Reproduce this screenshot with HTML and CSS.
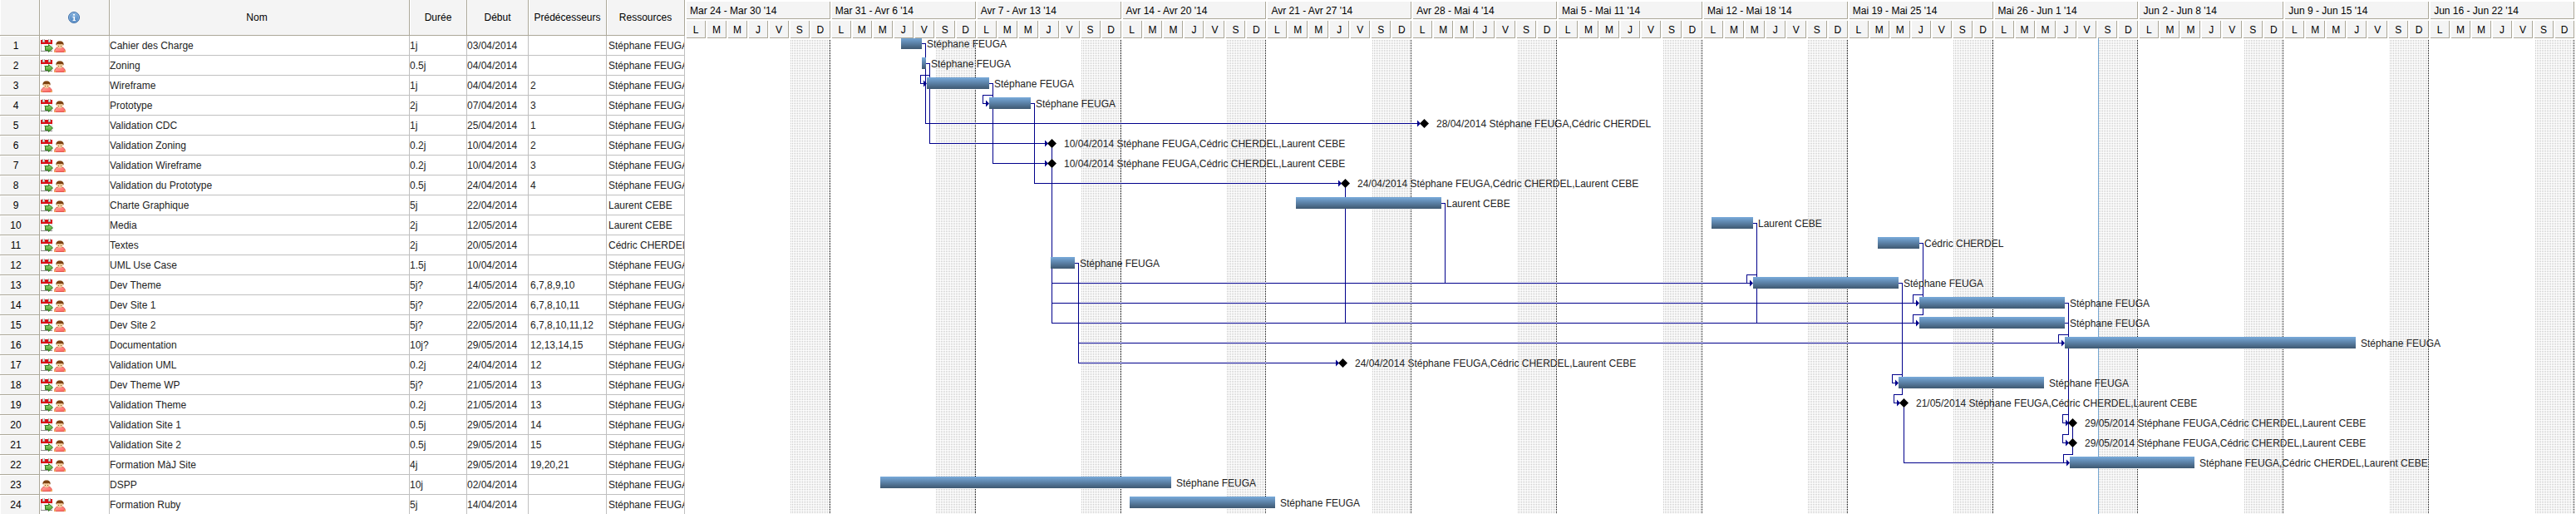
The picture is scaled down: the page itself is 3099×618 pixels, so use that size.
FILE: index.html
```html
<!DOCTYPE html>
<html lang="fr">
<head>
<meta charset="utf-8">
<title>Planning du projet</title>
<link rel="stylesheet" href="styles.css">
</head>
<body>
<svg class="symbols" aria-hidden="true">
  <defs>
    <linearGradient id="arrow-fill" x1="0" y1="0" x2="0" y2="1"><stop offset="0" stop-color="#9fd880"/><stop offset="1" stop-color="#3f9a22"/></linearGradient>
    <linearGradient id="body-fill" x1="0" y1="0" x2="1" y2="1"><stop offset="0" stop-color="#ffaaa4"/><stop offset="1" stop-color="#ff5f5a"/></linearGradient>
    <radialGradient id="info-fill" cx=".5" cy=".3" r=".7"><stop offset="0" stop-color="#8db8e2"/><stop offset="1" stop-color="#3f78b8"/></radialGradient>
  </defs>
  <symbol id="calendar" viewBox="0 0 16 16">
    <path d="M0 6h14v9H0z" fill="#fbfbfb"/>
    <path d="M0 6h1v9H0z" fill="#c9c9c9"/>
    <path d="M13 6h1v9h-1z" fill="#dcdcdc"/>
    <path d="M0 14h14v1H0z" fill="#8f8f8f"/>
    <path d="M0 1h14v5H0z" fill="#d90f16"/>
    <path d="M2 0h3v4H2zM9 0h3v4H9z" fill="#a9a9a9"/>
    <path d="M3 0h1v3H3zM10 0h1v3h-1z" fill="#f2f2f2"/>
    <path d="M4 8h5v1H4z" fill="#9a9a9a"/>
    <path d="M5.500 8.500h4v-2l5 4.500-5 4.500v-2h-4z" fill="url(#arrow-fill)" stroke="#2f7d1b"/>
  </symbol>
  <symbol id="person" viewBox="0 0 16 16">
    <path d="M.5 15.500c0-3 1.500-5 4-5.500h5c2.500.5 4 2.500 4 5.500z" fill="url(#body-fill)" stroke="#e0564e"/>
    <path d="M0 14h2v2H0zM12 14h2v2h-2z" fill="#eda45e"/>
    <path d="M5 9h4v2H5z" fill="#e8b98c"/>
    <path d="M3 6.500c0-3 1.500-4 4-4s4 1 4 4-1.500 4-4 4-4-1-4-4z" fill="#f6cf9f"/>
    <path d="M2.500 7.500c-.5-3 1-5 4.500-5s5 2 4.500 5l-1.500-1.500c-2 .4-4 .4-6 0z" fill="#7d4312"/>
    <path d="M5 8h1v1H5zM8 8h1v1H8z" fill="#8a5a32"/>
  </symbol>
  <symbol id="diamond" viewBox="0 0 11 11"><path d="M5.500 0L11 5.500 5.500 11 0 5.500z"/></symbol>
</svg>

<main class="planner">
<table class="tasks">
<colgroup><col class="c-num"><col class="c-info"><col class="c-name"><col class="c-dur"><col class="c-start"><col class="c-pred"><col class="c-res"></colgroup>
<thead>
<tr><th></th><th><svg class="info" viewBox="0 0 14 14" role="img" aria-label="Informations"><circle cx="7" cy="7" r="6.500" fill="url(#info-fill)" stroke="#3c6ea8"/><circle cx="7" cy="7" r="5.500" fill="none" stroke="#b5d3ef" stroke-opacity=".5"/><path d="M6 3h2v1.500H6zM5.500 6H8v4h1v1H5.500v-1h1V7h-1z" fill="#fff"/></svg></th><th class="name-head">Nom</th><th>Durée</th><th>Début</th><th>Prédécesseurs</th><th>Ressources</th></tr>
</thead>
<tbody>
<tr><th>1</th><td><div class="icons"><svg><use href="#calendar"/></svg><svg><use href="#person"/></svg></div></td><td>Cahier des Charge</td><td>1j</td><td>03/04/2014</td><td></td><td>Stéphane FEUGA</td></tr>
<tr><th>2</th><td><div class="icons"><svg><use href="#calendar"/></svg><svg><use href="#person"/></svg></div></td><td>Zoning</td><td>0.5j</td><td>04/04/2014</td><td></td><td>Stéphane FEUGA</td></tr>
<tr><th>3</th><td><div class="icons"><svg><use href="#person"/></svg></div></td><td>Wireframe</td><td>1j</td><td>04/04/2014</td><td>2</td><td>Stéphane FEUGA</td></tr>
<tr><th>4</th><td><div class="icons"><svg><use href="#calendar"/></svg><svg><use href="#person"/></svg></div></td><td>Prototype</td><td>2j</td><td>07/04/2014</td><td>3</td><td>Stéphane FEUGA</td></tr>
<tr><th>5</th><td><div class="icons"><svg><use href="#calendar"/></svg></div></td><td>Validation CDC</td><td>1j</td><td>25/04/2014</td><td>1</td><td>Stéphane FEUGA</td></tr>
<tr><th>6</th><td><div class="icons"><svg><use href="#calendar"/></svg><svg><use href="#person"/></svg></div></td><td>Validation Zoning</td><td>0.2j</td><td>10/04/2014</td><td>2</td><td>Stéphane FEUGA</td></tr>
<tr><th>7</th><td><div class="icons"><svg><use href="#calendar"/></svg><svg><use href="#person"/></svg></div></td><td>Validation Wireframe</td><td>0.2j</td><td>10/04/2014</td><td>3</td><td>Stéphane FEUGA</td></tr>
<tr><th>8</th><td><div class="icons"><svg><use href="#calendar"/></svg><svg><use href="#person"/></svg></div></td><td>Validation du Prototype</td><td>0.5j</td><td>24/04/2014</td><td>4</td><td>Stéphane FEUGA</td></tr>
<tr><th>9</th><td><div class="icons"><svg><use href="#calendar"/></svg><svg><use href="#person"/></svg></div></td><td>Charte Graphique</td><td>5j</td><td>22/04/2014</td><td></td><td>Laurent CEBE</td></tr>
<tr><th>10</th><td><div class="icons"><svg><use href="#calendar"/></svg></div></td><td>Media</td><td>2j</td><td>12/05/2014</td><td></td><td>Laurent CEBE</td></tr>
<tr><th>11</th><td><div class="icons"><svg><use href="#calendar"/></svg><svg><use href="#person"/></svg></div></td><td>Textes</td><td>2j</td><td>20/05/2014</td><td></td><td>Cédric CHERDEL</td></tr>
<tr><th>12</th><td><div class="icons"><svg><use href="#calendar"/></svg><svg><use href="#person"/></svg></div></td><td>UML Use Case</td><td>1.5j</td><td>10/04/2014</td><td></td><td>Stéphane FEUGA</td></tr>
<tr><th>13</th><td><div class="icons"><svg><use href="#calendar"/></svg><svg><use href="#person"/></svg></div></td><td>Dev Theme</td><td>5j?</td><td>14/05/2014</td><td>6,7,8,9,10</td><td>Stéphane FEUGA</td></tr>
<tr><th>14</th><td><div class="icons"><svg><use href="#calendar"/></svg><svg><use href="#person"/></svg></div></td><td>Dev Site 1</td><td>5j?</td><td>22/05/2014</td><td>6,7,8,10,11</td><td>Stéphane FEUGA</td></tr>
<tr><th>15</th><td><div class="icons"><svg><use href="#calendar"/></svg><svg><use href="#person"/></svg></div></td><td>Dev Site 2</td><td>5j?</td><td>22/05/2014</td><td>6,7,8,10,11,12</td><td>Stéphane FEUGA</td></tr>
<tr><th>16</th><td><div class="icons"><svg><use href="#calendar"/></svg><svg><use href="#person"/></svg></div></td><td>Documentation</td><td>10j?</td><td>29/05/2014</td><td>12,13,14,15</td><td>Stéphane FEUGA</td></tr>
<tr><th>17</th><td><div class="icons"><svg><use href="#calendar"/></svg><svg><use href="#person"/></svg></div></td><td>Validation UML</td><td>0.2j</td><td>24/04/2014</td><td>12</td><td>Stéphane FEUGA</td></tr>
<tr><th>18</th><td><div class="icons"><svg><use href="#calendar"/></svg><svg><use href="#person"/></svg></div></td><td>Dev Theme WP</td><td>5j?</td><td>21/05/2014</td><td>13</td><td>Stéphane FEUGA</td></tr>
<tr><th>19</th><td><div class="icons"><svg><use href="#calendar"/></svg><svg><use href="#person"/></svg></div></td><td>Validation Theme</td><td>0.2j</td><td>21/05/2014</td><td>13</td><td>Stéphane FEUGA</td></tr>
<tr><th>20</th><td><div class="icons"><svg><use href="#calendar"/></svg><svg><use href="#person"/></svg></div></td><td>Validation Site 1</td><td>0.5j</td><td>29/05/2014</td><td>14</td><td>Stéphane FEUGA</td></tr>
<tr><th>21</th><td><div class="icons"><svg><use href="#calendar"/></svg><svg><use href="#person"/></svg></div></td><td>Validation Site 2</td><td>0.5j</td><td>29/05/2014</td><td>15</td><td>Stéphane FEUGA</td></tr>
<tr><th>22</th><td><div class="icons"><svg><use href="#calendar"/></svg><svg><use href="#person"/></svg></div></td><td>Formation MàJ Site</td><td>4j</td><td>29/05/2014</td><td>19,20,21</td><td>Stéphane FEUGA</td></tr>
<tr><th>23</th><td><div class="icons"><svg><use href="#person"/></svg></div></td><td>DSPP</td><td>10j</td><td>02/04/2014</td><td></td><td>Stéphane FEUGA</td></tr>
<tr><th>24</th><td><div class="icons"><svg><use href="#calendar"/></svg><svg><use href="#person"/></svg></div></td><td>Formation Ruby</td><td>5j</td><td>14/04/2014</td><td></td><td>Stéphane FEUGA</td></tr>
</tbody>
</table>

<section class="timeline" aria-label="Diagramme de Gantt">
<header class="scale">
<div class="week-head"><div class="title">Mar 24 - Mar 30 '14</div><div class="days"><span>L</span><span>M</span><span>M</span><span>J</span><span>V</span><span>S</span><span>D</span></div></div>
<div class="week-head"><div class="title">Mar 31 - Avr 6 '14</div><div class="days"><span>L</span><span>M</span><span>M</span><span>J</span><span>V</span><span>S</span><span>D</span></div></div>
<div class="week-head"><div class="title">Avr 7 - Avr 13 '14</div><div class="days"><span>L</span><span>M</span><span>M</span><span>J</span><span>V</span><span>S</span><span>D</span></div></div>
<div class="week-head"><div class="title">Avr 14 - Avr 20 '14</div><div class="days"><span>L</span><span>M</span><span>M</span><span>J</span><span>V</span><span>S</span><span>D</span></div></div>
<div class="week-head"><div class="title">Avr 21 - Avr 27 '14</div><div class="days"><span>L</span><span>M</span><span>M</span><span>J</span><span>V</span><span>S</span><span>D</span></div></div>
<div class="week-head"><div class="title">Avr 28 - Mai 4 '14</div><div class="days"><span>L</span><span>M</span><span>M</span><span>J</span><span>V</span><span>S</span><span>D</span></div></div>
<div class="week-head"><div class="title">Mai 5 - Mai 11 '14</div><div class="days"><span>L</span><span>M</span><span>M</span><span>J</span><span>V</span><span>S</span><span>D</span></div></div>
<div class="week-head"><div class="title">Mai 12 - Mai 18 '14</div><div class="days"><span>L</span><span>M</span><span>M</span><span>J</span><span>V</span><span>S</span><span>D</span></div></div>
<div class="week-head"><div class="title">Mai 19 - Mai 25 '14</div><div class="days"><span>L</span><span>M</span><span>M</span><span>J</span><span>V</span><span>S</span><span>D</span></div></div>
<div class="week-head"><div class="title">Mai 26 - Jun 1 '14</div><div class="days"><span>L</span><span>M</span><span>M</span><span>J</span><span>V</span><span>S</span><span>D</span></div></div>
<div class="week-head"><div class="title">Jun 2 - Jun 8 '14</div><div class="days"><span>L</span><span>M</span><span>M</span><span>J</span><span>V</span><span>S</span><span>D</span></div></div>
<div class="week-head"><div class="title">Jun 9 - Jun 15 '14</div><div class="days"><span>L</span><span>M</span><span>M</span><span>J</span><span>V</span><span>S</span><span>D</span></div></div>
<div class="week-head"><div class="title">Jun 16 - Jun 22 '14</div><div class="days"><span>L</span><span>M</span><span>M</span><span>J</span><span>V</span><span>S</span><span>D</span></div></div>
</header>
<div class="chart">
<div class="weeks"><div class="week"></div><div class="week"></div><div class="week"></div><div class="week"></div><div class="week"></div><div class="week"></div><div class="week"></div><div class="week"></div><div class="week"></div><div class="week"></div><div class="week"></div><div class="week"></div><div class="week"></div></div>
<div class="today" style="--x:1698"></div>
<svg class="links" viewBox="826 46 2273 572" preserveAspectRatio="none" aria-hidden="true">
  <g class="lines">
    <path d="M1109 52.500H1113.500V148.500H1706"/>
    <path d="M1114 76.500H1118.500V172.500H1258M1118.500 90.500H1107.500V100.500H1112"/>
    <path d="M1190 100.500H1194.500V196.500H1258M1194.500 114.500H1182.500V124.500H1187"/>
    <path d="M1240 124.500H1244.500V220.500H1611"/>
    <path d="M1265.500 172.500V388.500H2306M1265.500 340.500H2106M1265.500 364.500H2306"/>
    <path d="M1618.500 220.500V388.500"/>
    <path d="M1734 244.500H1738.500V340.500"/>
    <path d="M2109 268.500H2113.500V388.500M2113.500 330.500H2101.500V340.500"/>
    <path d="M2309 292.500H2313.500V378.500H2301.500V388.500M2313.500 354.500H2301.500V364.500"/>
    <path d="M1293 316.500H1297.500V436.500H1608M1297.500 412.500H2481"/>
    <path d="M2284 340.500H2288.500V474.500H2278.500V484.500H2283M2288.500 450.500H2276.500V460.500H2281"/>
    <path d="M2484 364.500H2488.500V522.500H2481.500V532.500H2486M2484 388.500H2488.500V402.500H2476.500V412.500M2488.500 498.500H2481.500V508.500H2486"/>
    <path d="M2290.500 484.500V556.500H2487M2493.500 508.500V546.500H2482.500V556.500"/>
  </g>
  <path class="heads" d="M1115 100.500l-4-4v8zM1190 124.500l-4-4v8zM1709 148.500l-4-4v8zM1261 172.500l-4-4v8zM1261 196.500l-4-4v8zM1614 220.500l-4-4v8zM2109 340.500l-4-4v8zM2309 364.500l-4-4v8zM2309 388.500l-4-4v8zM2484 412.500l-4-4v8zM1611 436.500l-4-4v8zM2284 460.500l-4-4v8zM2286 484.500l-4-4v8zM2489 508.500l-4-4v8zM2489 532.500l-4-4v8zM2490 556.500l-4-4v8z"/>
</svg>
<div class="bar" style="--x:258;--w:25;--row:0"><span>Stéphane FEUGA</span></div>
<div class="bar" style="--x:283;--w:5;--row:1"><span>Stéphane FEUGA</span></div>
<div class="bar" style="--x:289;--w:75;--row:2"><span>Stéphane FEUGA</span></div>
<div class="bar" style="--x:364;--w:50;--row:3"><span>Stéphane FEUGA</span></div>
<div class="milestone" style="--x:882;--row:4"><svg><use href="#diamond"/></svg><span>28/04/2014 Stéphane FEUGA,Cédric CHERDEL</span></div>
<div class="milestone" style="--x:434;--row:5"><svg><use href="#diamond"/></svg><span>10/04/2014 Stéphane FEUGA,Cédric CHERDEL,Laurent CEBE</span></div>
<div class="milestone" style="--x:434;--row:6"><svg><use href="#diamond"/></svg><span>10/04/2014 Stéphane FEUGA,Cédric CHERDEL,Laurent CEBE</span></div>
<div class="milestone" style="--x:787;--row:7"><svg><use href="#diamond"/></svg><span>24/04/2014 Stéphane FEUGA,Cédric CHERDEL,Laurent CEBE</span></div>
<div class="bar" style="--x:733;--w:175;--row:8"><span>Laurent CEBE</span></div>
<div class="bar" style="--x:1233;--w:50;--row:9"><span>Laurent CEBE</span></div>
<div class="bar" style="--x:1433;--w:50;--row:10"><span>Cédric CHERDEL</span></div>
<div class="bar" style="--x:438;--w:29;--row:11"><span>Stéphane FEUGA</span></div>
<div class="bar" style="--x:1283;--w:175;--row:12"><span>Stéphane FEUGA</span></div>
<div class="bar" style="--x:1483;--w:175;--row:13"><span>Stéphane FEUGA</span></div>
<div class="bar" style="--x:1483;--w:175;--row:14"><span>Stéphane FEUGA</span></div>
<div class="bar" style="--x:1658;--w:350;--row:15"><span>Stéphane FEUGA</span></div>
<div class="milestone" style="--x:784;--row:16"><svg><use href="#diamond"/></svg><span>24/04/2014 Stéphane FEUGA,Cédric CHERDEL,Laurent CEBE</span></div>
<div class="bar" style="--x:1458;--w:175;--row:17"><span>Stéphane FEUGA</span></div>
<div class="milestone" style="--x:1459;--row:18"><svg><use href="#diamond"/></svg><span>21/05/2014 Stéphane FEUGA,Cédric CHERDEL,Laurent CEBE</span></div>
<div class="milestone" style="--x:1662;--row:19"><svg><use href="#diamond"/></svg><span>29/05/2014 Stéphane FEUGA,Cédric CHERDEL,Laurent CEBE</span></div>
<div class="milestone" style="--x:1662;--row:20"><svg><use href="#diamond"/></svg><span>29/05/2014 Stéphane FEUGA,Cédric CHERDEL,Laurent CEBE</span></div>
<div class="bar" style="--x:1664;--w:150;--row:21"><span>Stéphane FEUGA,Cédric CHERDEL,Laurent CEBE</span></div>
<div class="bar" style="--x:233;--w:350;--row:22"><span>Stéphane FEUGA</span></div>
<div class="bar" style="--x:533;--w:175;--row:23"><span>Stéphane FEUGA</span></div>
</div>
</section>
</main>
</body>
</html>
```

FILE: styles.css
```css
* { box-sizing: border-box; }

body {
  margin: 0;
  background: #fff;
  color: #222;
  font: 12px/14px "Liberation Sans", Arial, sans-serif;
}

.symbols { position: absolute; width: 0; height: 0; }

.planner { display: flex; gap: 2px; }

/* task table */
.tasks {
  flex: none;
  width: 824px;
  table-layout: fixed;
  border-collapse: separate;
  border-spacing: 0;
}
.c-num { width: 48px; }
.c-info { width: 84px; }
.c-name { width: 361px; }
.c-dur { width: 69px; }
.c-start { width: 74px; }
.c-pred, .c-res { width: 94px; }

.tasks th, .tasks td {
  height: 24px;
  padding: 1px 0 0;
  overflow: hidden;
  white-space: nowrap;
  border: solid #c0c0c0;
  border-width: 0 1px 1px 0;
  text-align: left;
}
.tasks th {
  background: #f4f4f4;
  border-color: #aca899;
  box-shadow: inset 1px 1px #fff;
  color: #000;
  font-weight: normal;
  text-align: center;
}
.tasks thead th { height: 43px; padding: 0; box-shadow: inset 1px 0 #fff; }
.tasks thead .name-head { padding-right: 6px; }
.tasks tbody th { padding-right: 9px; }
.tasks td:nth-child(n+6) { padding-left: 2px; }
.tasks tbody tr:last-child > * { height: 23px; border-bottom: 0; }

.info { display: block; width: 14px; height: 14px; margin-left: 34px; }
.icons { display: flex; padding-left: 1px; }
.icons svg { width: 16px; height: 16px; }

/* time scale */
.timeline { flex: 1; min-width: 0; display: flex; flex-direction: column; overflow: hidden; }
.scale, .weeks { display: grid; grid-template-columns: repeat(13, 1fr); }
.scale { padding-top: 2px; color: #000; }
.week-head { display: grid; gap: 2px; min-width: 0; }
.title, .days span {
  height: 21px;
  margin-right: 2px;
  background: #f4f4f4;
  border: solid #aca899;
  border-width: 0 1px 1px 0;
  line-height: 23px;
}
.title { padding-left: 4px; white-space: nowrap; overflow: hidden; }
.days { display: grid; grid-template-columns: repeat(7, 1fr); text-align: center; }

/* chart */
.chart { position: relative; flex: 1; overflow: hidden; }
.weeks { height: 100%; padding-top: 2px; }
.week {
  display: grid;
  grid-template-columns: 5fr 2fr;
  padding-right: 2px;
  background: repeating-linear-gradient(#000 0 1px, transparent 1px 2px) right / 1px 100% no-repeat content-box;
  background-origin: content-box;
}
.week::after {
  content: "";
  grid-column: 2;
  margin: 0 1px 0 2px;
  background: conic-gradient(at 1px 1px, transparent 75%, #c2c2c2 0) 0 0 / 2px 2px;
}
.today, .bar, .milestone { position: absolute; left: calc(var(--x) * 100% / 2273); }
.today { top: 0; bottom: 0; width: 1px; background: #78a9d4; }
.links { position: absolute; top: 0; left: 0; width: 100%; height: 100%; }
.lines { fill: none; stroke: #00008b; shape-rendering: crispEdges; }
.lines path { vector-effect: non-scaling-stroke; }
.heads { fill: #00008b; }

.bar, .milestone { top: calc(var(--row) * 24px - 1px); height: 14px; white-space: nowrap; }
.bar {
  width: calc(var(--w) * 100% / 2273);
  background: linear-gradient(#78aadb, #3e5871);
}
.bar span { display: block; margin-left: calc(100% + 6px); line-height: 16px; }
.milestone { display: flex; align-items: center; gap: 9px; height: 16px; }
.milestone svg { width: 11px; height: 11px; margin-bottom: 1px; }
.milestone span { line-height: 18px; }
```
